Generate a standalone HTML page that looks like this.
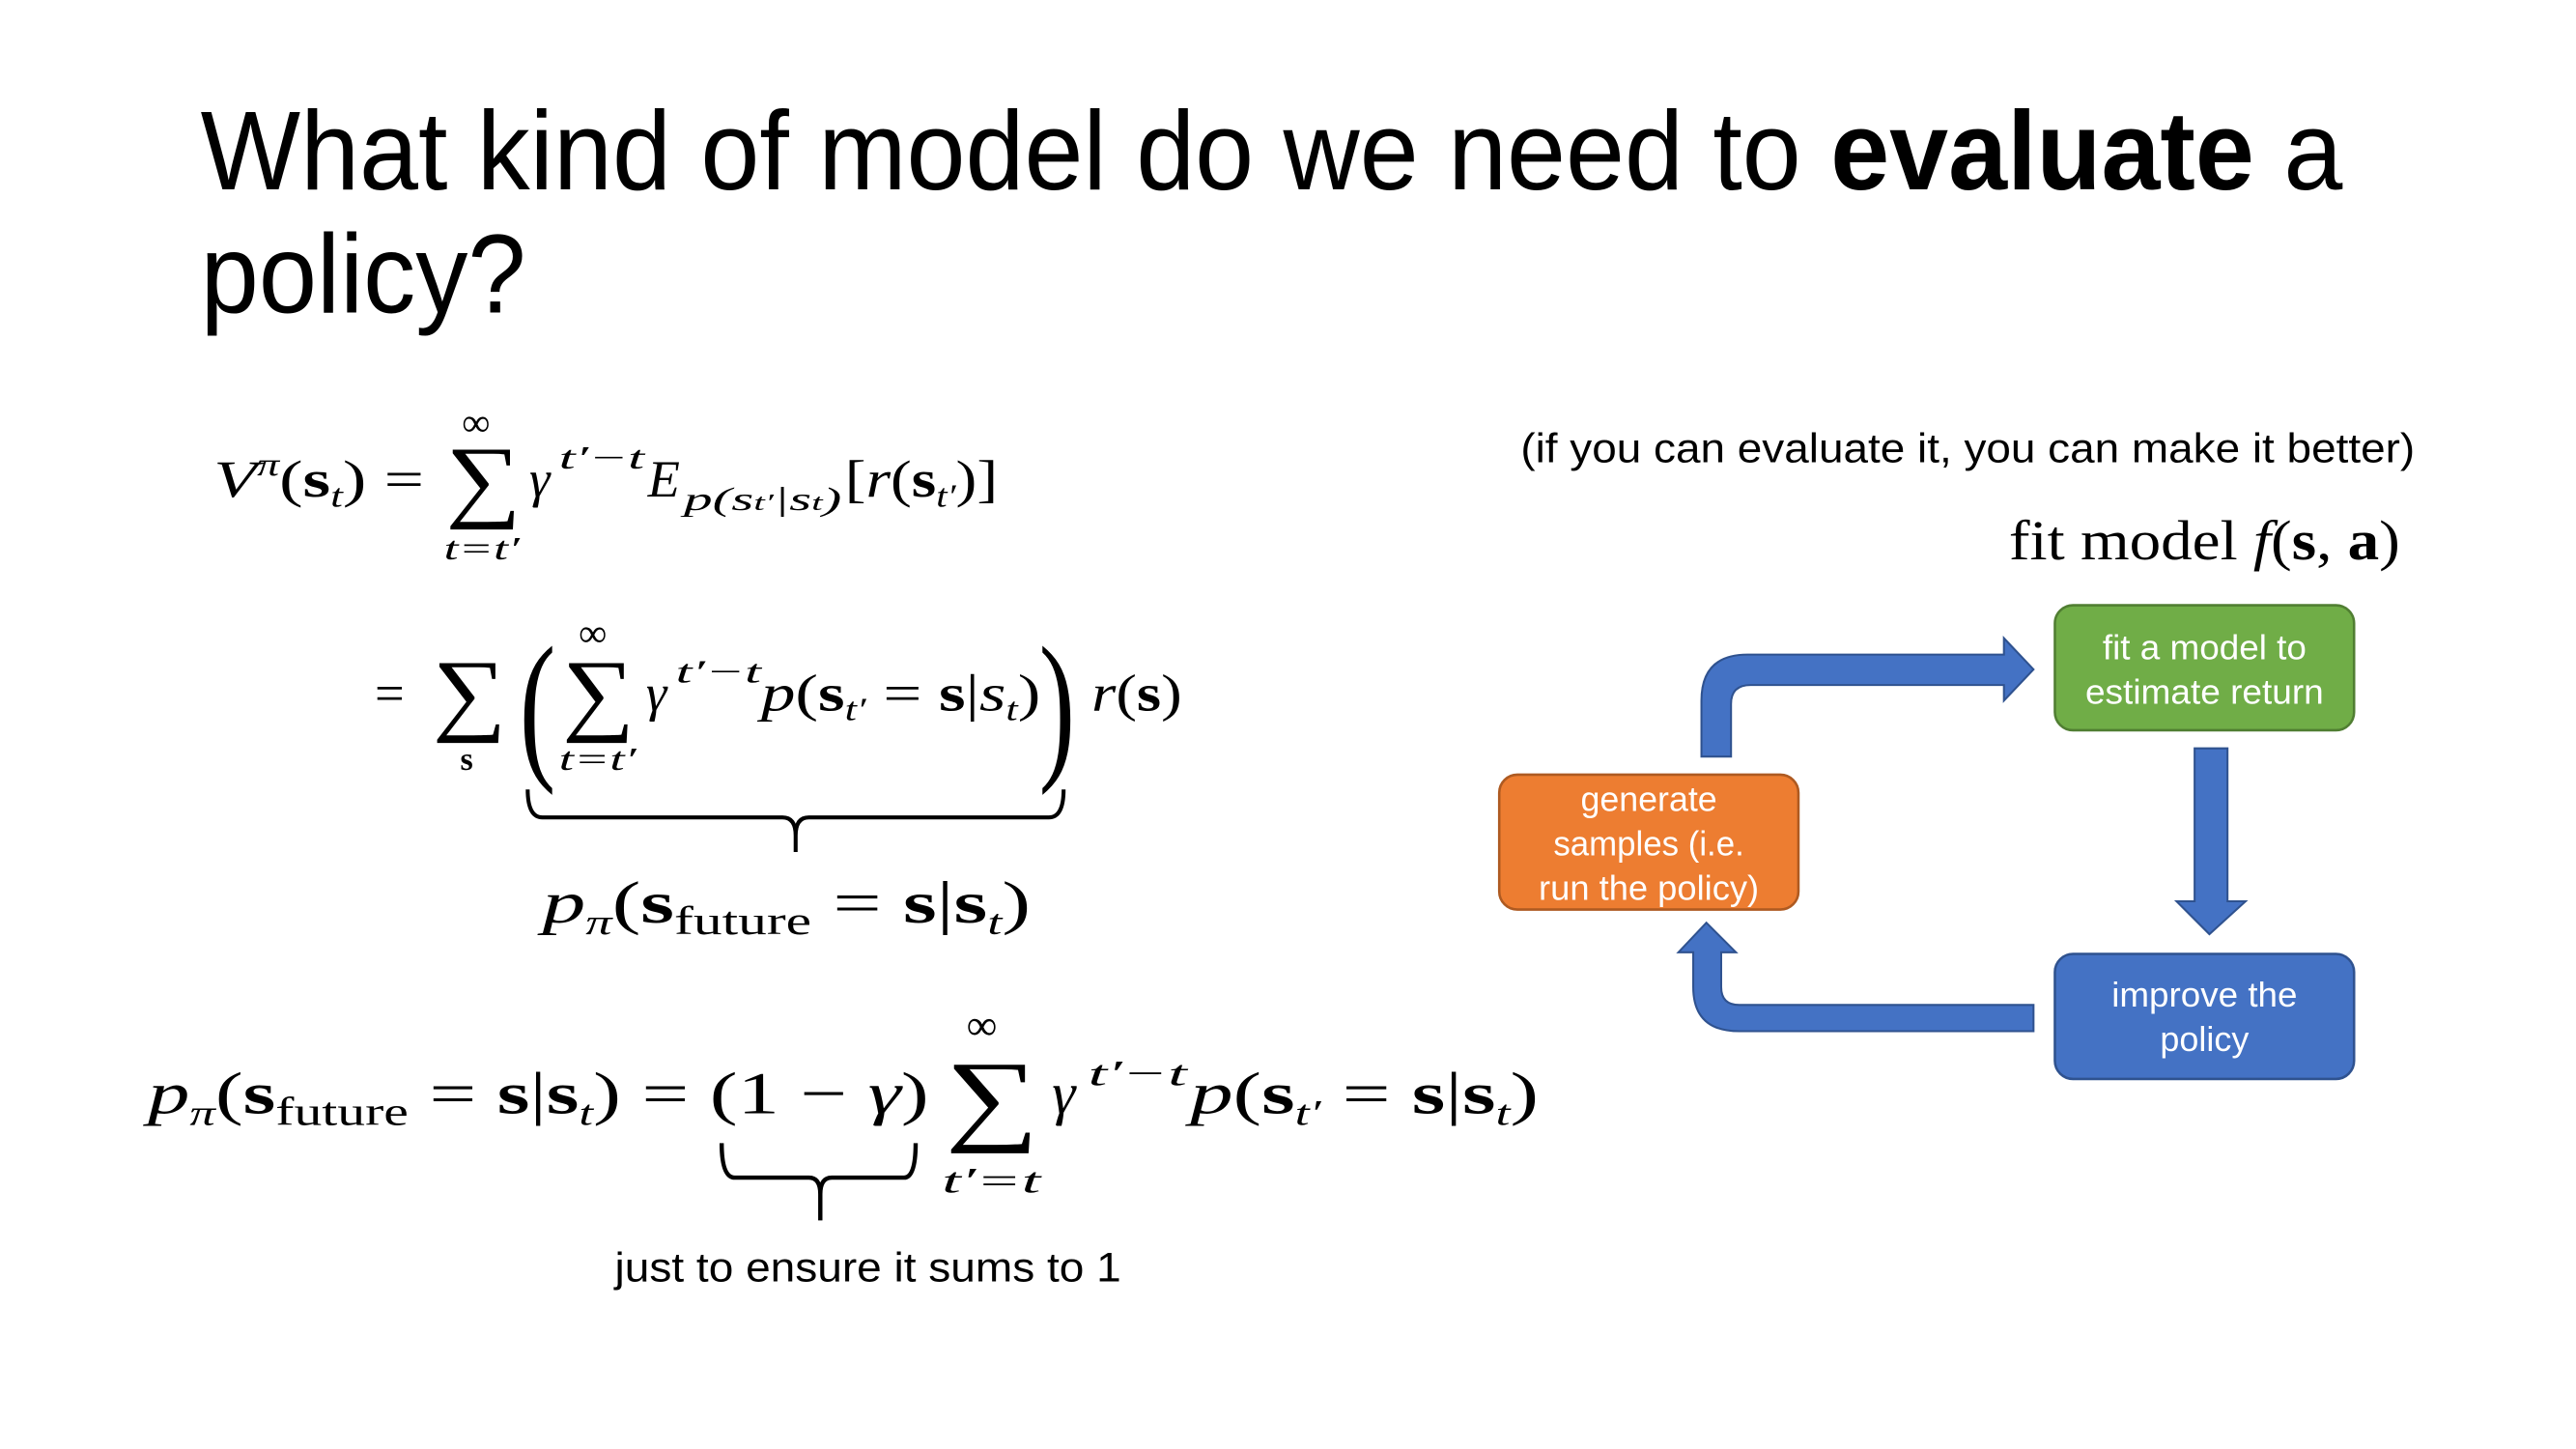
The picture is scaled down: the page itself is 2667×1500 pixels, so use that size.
<!DOCTYPE html>
<html><head><meta charset="utf-8"><style>
html,body{margin:0;padding:0;background:#fff;}
svg{display:block;}
.t{font-family:"Liberation Sans",sans-serif;}
.m{font-family:"Liberation Serif",serif;}
.i{font-style:italic;}
.b{font-weight:bold;}
</style></head><body>
<svg width="2667" height="1500" viewBox="0 0 1567 881" preserveAspectRatio="none" xmlns="http://www.w3.org/2000/svg">
<rect width="1567" height="881" fill="#fff"/>
<!-- title -->
<text class="t" x="122" y="115" font-size="68" fill="#000" textLength="1303" lengthAdjust="spacingAndGlyphs">What kind of model do we need to <tspan font-weight="bold">evaluate</tspan> a</text>
<text class="t" x="122" y="190" font-size="68" fill="#000" textLength="198" lengthAdjust="spacingAndGlyphs">policy?</text>

<!-- eq1 -->
<g class="m" fill="#000">
<text x="130" y="302" font-size="32" textLength="128" lengthAdjust="spacingAndGlyphs"><tspan class="i">V</tspan><tspan font-size="20" dy="-13" class="i">π</tspan><tspan dy="13">(</tspan><tspan class="b">s</tspan><tspan class="i" font-size="20" dy="6">t</tspan><tspan dy="-6">) =</tspan></text>
<text x="271" y="310" font-size="56" textLength="46" lengthAdjust="spacingAndGlyphs">∑</text>
<text x="281" y="265" font-size="24">∞</text>
<text x="270" y="340" font-size="20" class="i" textLength="46" lengthAdjust="spacingAndGlyphs">t=t′</text>
<text x="322" y="302" font-size="32" class="i">γ</text>
<text x="340" y="285" font-size="20" class="i" textLength="52" lengthAdjust="spacingAndGlyphs">t′−t</text>
<text x="394" y="302" font-size="32" class="i">E</text>
<text x="416" y="310" font-size="20" class="i" textLength="96" lengthAdjust="spacingAndGlyphs">p(s<tspan font-size="14">t′</tspan>|s<tspan font-size="14">t</tspan>)</text>
<text x="514" y="302" font-size="32" textLength="93" lengthAdjust="spacingAndGlyphs">[<tspan class="i">r</tspan>(<tspan class="b">s</tspan><tspan class="i" font-size="20" dy="6">t′</tspan><tspan dy="-6">)]</tspan></text>
</g>

<!-- eq2 -->
<g class="m" fill="#000">
<text x="228" y="432" font-size="32">=</text>
<text x="263" y="440" font-size="56" textLength="45" lengthAdjust="spacingAndGlyphs">∑</text>
<text x="280" y="468" font-size="20" class="b">s</text>
<text x="316" y="462" font-size="100" textLength="22" lengthAdjust="spacingAndGlyphs">(</text>
<text x="342" y="440" font-size="56" textLength="44" lengthAdjust="spacingAndGlyphs">∑</text>
<text x="352" y="393" font-size="24">∞</text>
<text x="340" y="468" font-size="20" class="i" textLength="47" lengthAdjust="spacingAndGlyphs">t=t′</text>
<text x="393" y="432" font-size="32" class="i">γ</text>
<text x="411" y="415" font-size="20" class="i" textLength="52" lengthAdjust="spacingAndGlyphs">t′−t</text>
<text x="463" y="432" font-size="32" textLength="170" lengthAdjust="spacingAndGlyphs"><tspan class="i">p</tspan>(<tspan class="b">s</tspan><tspan class="i" font-size="20" dy="6">t′</tspan><tspan dy="-6"> = </tspan><tspan class="b">s</tspan>|<tspan class="i">s</tspan><tspan class="i" font-size="20" dy="6">t</tspan><tspan dy="-6">)</tspan></text>
<text x="632" y="462" font-size="100" textLength="22" lengthAdjust="spacingAndGlyphs">)</text>
<text x="664" y="432" font-size="32" textLength="55" lengthAdjust="spacingAndGlyphs"><tspan class="i">r</tspan>(<tspan class="b">s</tspan>)</text>
<path d="M321,480 Q321,497 330,497 L476,497 Q484,497 484,508 L484,518 M484,518 L484,508 Q484,497 492,497 L638,497 Q647,497 647,480" fill="none" stroke="#000" stroke-width="2.4"/>
<text x="330" y="561" font-size="36" textLength="297" lengthAdjust="spacingAndGlyphs"><tspan class="i">p</tspan><tspan class="i" font-size="22" dy="7">π</tspan><tspan dy="-7">(</tspan><tspan class="b">s</tspan><tspan font-size="24" dy="7">future</tspan><tspan dy="-7"> = </tspan><tspan class="b">s</tspan>|<tspan class="b">s</tspan><tspan class="i" font-size="22" dy="7">t</tspan><tspan dy="-7">)</tspan></text>
</g>

<!-- eq3 -->
<g class="m" fill="#000">
<text x="90" y="677" font-size="36" textLength="475" lengthAdjust="spacingAndGlyphs"><tspan class="i">p</tspan><tspan class="i" font-size="22" dy="7">π</tspan><tspan dy="-7">(</tspan><tspan class="b">s</tspan><tspan font-size="24" dy="7">future</tspan><tspan dy="-7"> = </tspan><tspan class="b">s</tspan>|<tspan class="b">s</tspan><tspan class="i" font-size="22" dy="7">t</tspan><tspan dy="-7">) = (1 − </tspan><tspan class="i">γ</tspan>)</text>
<text x="575" y="688" font-size="62" textLength="57" lengthAdjust="spacingAndGlyphs">∑</text>
<text x="588" y="632" font-size="26">∞</text>
<text x="573" y="725" font-size="22" class="i" textLength="60" lengthAdjust="spacingAndGlyphs">t′=t</text>
<text x="640" y="677" font-size="36" class="i">γ</text>
<text x="662" y="660" font-size="22" class="i" textLength="60" lengthAdjust="spacingAndGlyphs">t′−t</text>
<text x="724" y="677" font-size="36" textLength="212" lengthAdjust="spacingAndGlyphs"><tspan class="i">p</tspan>(<tspan class="b">s</tspan><tspan class="i" font-size="22" dy="7">t′</tspan><tspan dy="-7"> = </tspan><tspan class="b">s</tspan>|<tspan class="b">s</tspan><tspan class="i" font-size="22" dy="7">t</tspan><tspan dy="-7">)</tspan></text>
<path d="M439,695 Q439,716 447,716 L492,716 Q499,716 499,726 L499,742 M499,742 L499,726 Q499,716 506,716 L550,716 Q557,716 557,695" fill="none" stroke="#000" stroke-width="2.6"/>
</g>
<text class="t" x="374" y="779" font-size="25" textLength="308" lengthAdjust="spacingAndGlyphs" fill="#000">just to ensure it sums to 1</text>

<!-- right side -->
<text class="t" x="925" y="281" font-size="25" textLength="544" lengthAdjust="spacingAndGlyphs" fill="#000">(if you can evaluate it, you can make it better)</text>
<text class="m" x="1222" y="340" font-size="34" textLength="238" lengthAdjust="spacingAndGlyphs" fill="#000">fit model <tspan class="i">f</tspan>(<tspan class="b">s</tspan>, <tspan class="b">a</tspan>)</text>

<rect x="1250" y="368" width="182" height="76" rx="11" fill="#70ad47" stroke="#507e32" stroke-width="1.5"/>
<text class="t" x="1341" y="401" font-size="21" fill="#fff" text-anchor="middle" textLength="124" lengthAdjust="spacingAndGlyphs">fit a model to</text>
<text class="t" x="1341" y="428" font-size="21" fill="#fff" text-anchor="middle" textLength="145" lengthAdjust="spacingAndGlyphs">estimate return</text>

<rect x="912" y="471" width="182" height="82" rx="11" fill="#ed7d31" stroke="#ae5a21" stroke-width="1.5"/>
<text class="t" x="1003" y="493" font-size="21" fill="#fff" text-anchor="middle" textLength="83" lengthAdjust="spacingAndGlyphs">generate</text>
<text class="t" x="1003" y="520" font-size="21" fill="#fff" text-anchor="middle" textLength="116" lengthAdjust="spacingAndGlyphs">samples (i.e.</text>
<text class="t" x="1003" y="547" font-size="21" fill="#fff" text-anchor="middle" textLength="134" lengthAdjust="spacingAndGlyphs">run the policy)</text>

<rect x="1250" y="580" width="182" height="76" rx="11" fill="#4472c4" stroke="#2f528f" stroke-width="1.5"/>
<text class="t" x="1341" y="612" font-size="21" fill="#fff" text-anchor="middle" textLength="113" lengthAdjust="spacingAndGlyphs">improve the</text>
<text class="t" x="1341" y="639" font-size="21" fill="#fff" text-anchor="middle" textLength="54" lengthAdjust="spacingAndGlyphs">policy</text>

<g fill="#4472c4" stroke="#2f528f" stroke-width="1.2">
<path d="M1035,460 L1035,426 Q1035,398 1063,398 L1219,398 L1219,388 L1237,407 L1219,426 L1219,416.5 L1065,416.5 Q1053,416.5 1053,428 L1053,460 Z"/>
<path d="M1335,455 L1355,455 L1355,548 L1366,548 L1344,568 L1324,548 L1335,548 Z"/>
<path d="M1237,611 L1058,611 Q1047,611 1047,600 L1047,579 L1056,579 L1038,561 L1021,579 L1030,579 L1030,600 Q1030,627 1058,627 L1237,627 Z"/>
</g>
</svg>
</body></html>
